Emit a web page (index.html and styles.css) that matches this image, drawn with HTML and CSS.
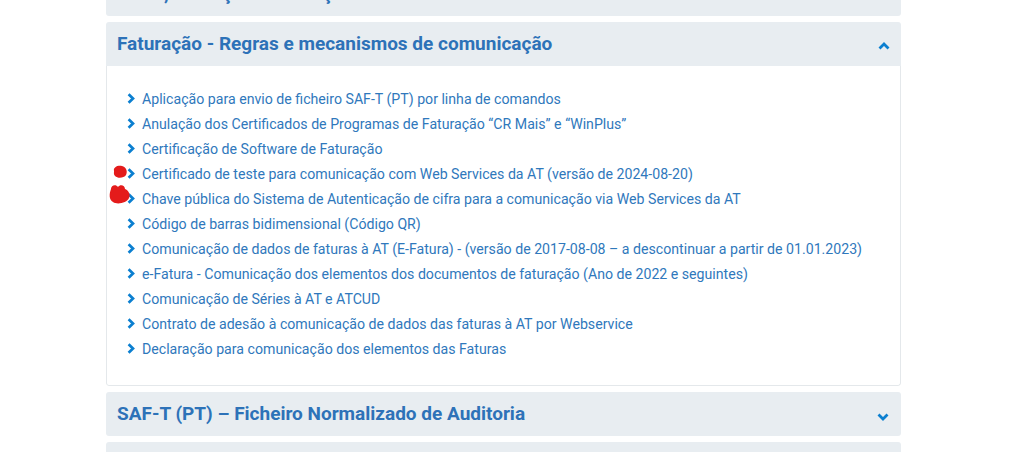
FILE: index.html
```html
<!DOCTYPE html>
<html lang="pt">
<head>
<meta charset="utf-8">
<title>Faturação</title>
<link rel="stylesheet" href="styles.css">
</head>
<body>
<div class="accordion">
  <section class="panel">
    <header class="panel-head">
      <h2>Início, alteração e cessação de atividade</h2>
      <svg class="toggle" viewBox="0 0 12 8" width="12" height="8"><path d="M1.5 1.5 L6 6 L10.5 1.5" fill="none" stroke="#0b7fd0" stroke-width="2.8"/></svg>
    </header>
  </section>
  <section class="panel open">
    <header class="panel-head">
      <h2>Faturação - Regras e mecanismos de comunicação</h2>
      <svg class="toggle up" viewBox="0 0 12 8" width="12" height="8"><path d="M1.5 6.5 L6 2 L10.5 6.5" fill="none" stroke="#0b7fd0" stroke-width="2.8"/></svg>
    </header>
    <div class="panel-body">
      <ul class="links">
        <li><svg class="chev" viewBox="0 0 8 11" width="8" height="11"><path d="M1.6 1.2 L6 5.5 L1.6 9.8" fill="none" stroke="#0b7fd0" stroke-width="2.7"/></svg><a href="#">Aplicação para envio de ficheiro SAF-T (PT) por linha de comandos</a></li>
        <li><svg class="chev" viewBox="0 0 8 11" width="8" height="11"><path d="M1.6 1.2 L6 5.5 L1.6 9.8" fill="none" stroke="#0b7fd0" stroke-width="2.7"/></svg><a href="#">Anulação dos Certificados de Programas de Faturação “CR Mais” e “WinPlus”</a></li>
        <li><svg class="chev" viewBox="0 0 8 11" width="8" height="11"><path d="M1.6 1.2 L6 5.5 L1.6 9.8" fill="none" stroke="#0b7fd0" stroke-width="2.7"/></svg><a href="#">Certificação de Software de Faturação</a></li>
        <li><svg class="chev" viewBox="0 0 8 11" width="8" height="11"><path d="M1.6 1.2 L6 5.5 L1.6 9.8" fill="none" stroke="#0b7fd0" stroke-width="2.7"/></svg><a href="#">Certificado de teste para comunicação com Web Services da AT (versão de 2024-08-20)</a></li>
        <li><svg class="chev" viewBox="0 0 8 11" width="8" height="11"><path d="M1.6 1.2 L6 5.5 L1.6 9.8" fill="none" stroke="#0b7fd0" stroke-width="2.7"/></svg><a href="#">Chave pública do Sistema de Autenticação de cifra para a comunicação via Web Services da AT</a></li>
        <li><svg class="chev" viewBox="0 0 8 11" width="8" height="11"><path d="M1.6 1.2 L6 5.5 L1.6 9.8" fill="none" stroke="#0b7fd0" stroke-width="2.7"/></svg><a href="#">Código de barras bidimensional (Código QR)</a></li>
        <li><svg class="chev" viewBox="0 0 8 11" width="8" height="11"><path d="M1.6 1.2 L6 5.5 L1.6 9.8" fill="none" stroke="#0b7fd0" stroke-width="2.7"/></svg><a href="#">Comunicação de dados de faturas à AT (E-Fatura) - (versão de 2017-08-08 – a descontinuar a partir de 01.01.2023)</a></li>
        <li><svg class="chev" viewBox="0 0 8 11" width="8" height="11"><path d="M1.6 1.2 L6 5.5 L1.6 9.8" fill="none" stroke="#0b7fd0" stroke-width="2.7"/></svg><a href="#">e-Fatura - Comunicação dos elementos dos documentos de faturação (Ano de 2022 e seguintes)</a></li>
        <li><svg class="chev" viewBox="0 0 8 11" width="8" height="11"><path d="M1.6 1.2 L6 5.5 L1.6 9.8" fill="none" stroke="#0b7fd0" stroke-width="2.7"/></svg><a href="#">Comunicação de Séries à AT e ATCUD</a></li>
        <li><svg class="chev" viewBox="0 0 8 11" width="8" height="11"><path d="M1.6 1.2 L6 5.5 L1.6 9.8" fill="none" stroke="#0b7fd0" stroke-width="2.7"/></svg><a href="#">Contrato de adesão à comunicação de dados das faturas à AT por Webservice</a></li>
        <li><svg class="chev" viewBox="0 0 8 11" width="8" height="11"><path d="M1.6 1.2 L6 5.5 L1.6 9.8" fill="none" stroke="#0b7fd0" stroke-width="2.7"/></svg><a href="#">Declaração para comunicação dos elementos das Faturas</a></li>
      </ul>
      <svg class="mark mark-1" viewBox="0 0 16 14" width="16" height="14"><path d="M2 6 C1 2 6 0 10 1 C14 2 16 6 14 10 C12 13 6 14 3 11 C1.5 9.5 2 8 2 6 Z" fill="#e41b1b"/></svg>
      <svg class="mark mark-2" viewBox="0 0 24 21" width="24" height="21"><path d="M3 5 C3 1 8 0 10 3 C12 0 17 1 17 5 C20 6 23 10 21 14 C19 19 9 21 5 18 C1 16 1 10 3 5 Z" fill="#e41b1b"/></svg>
    </div>
  </section>
  <section class="panel">
    <header class="panel-head">
      <h2>SAF-T (PT) – Ficheiro Normalizado de Auditoria</h2>
      <svg class="toggle down" viewBox="0 0 12 8" width="12" height="8"><path d="M1.5 1.5 L6 6 L10.5 1.5" fill="none" stroke="#0b7fd0" stroke-width="2.8"/></svg>
    </header>
  </section>
  <section class="panel">
    <header class="panel-head">
      <h2>&nbsp;</h2>
    </header>
  </section>
</div>
</body>
</html>
```

FILE: styles.css
```css
html, body {
  margin: 0;
  padding: 0;
  background: #ffffff;
}

body {
  font-family: Roboto, "Liberation Sans", Arial, sans-serif;
  overflow: hidden;
  height: 452px;
}

.accordion {
  width: 795px;
  margin: -28px 0 0 106px;
  display: flex;
  flex-direction: column;
  gap: 6px;
}

.panel {
  border-radius: 3px;
  overflow: hidden;
}

.panel-head {
  height: 44px;
  background: #e8edf1;
  display: flex;
  align-items: center;
  justify-content: space-between;
  padding: 0 11px 0 11px;
  box-sizing: border-box;
}

.panel-head h2 {
  margin: 0;
  font-size: 19px;
  font-weight: 700;
  color: #2d72b8;
  line-height: 22px;
}

.toggle {
  display: block;
  margin-top: 4px;
}

.toggle.down {
  margin-top: 6px;
  margin-right: 1px;
}

.panel-body {
  position: relative;
  background: #fff;
  border: 1px solid #e4e8eb;
  border-top: none;
  border-radius: 0 0 3px 3px;
  padding: 20px 0 24px 20px;
}

.links {
  list-style: none;
  margin: 0;
  padding: 0;
}

.links li {
  display: flex;
  align-items: center;
  height: 25px;
  font-size: 14.15px;
}

.chev {
  display: block;
  flex: none;
  margin-right: 7px;
}

.links a {
  color: #2f78bc;
  text-decoration: none;
}

.mark {
  position: absolute;
}

.mark-1 {
  left: 5px;
  top: 99px;
}

.mark-2 {
  left: 1px;
  top: 118px;
}
```
